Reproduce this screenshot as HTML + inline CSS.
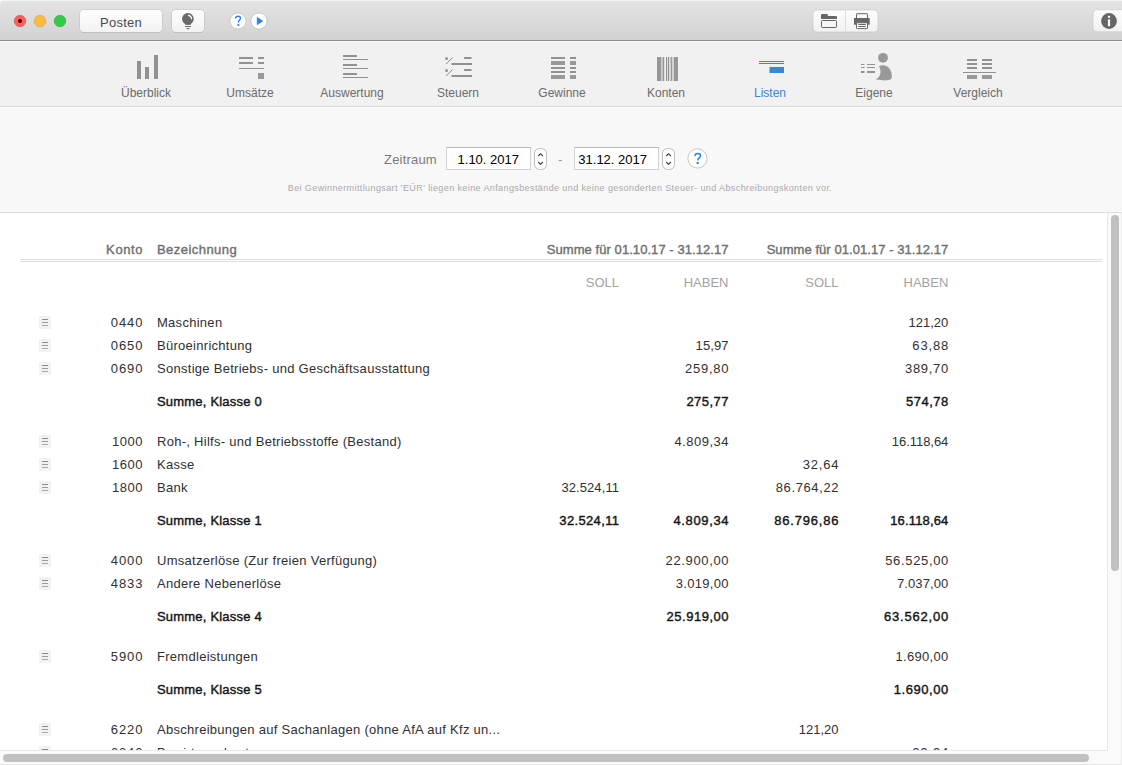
<!DOCTYPE html>
<html><head><meta charset="utf-8">
<style>
*{margin:0;padding:0;box-sizing:border-box}
html,body{width:1122px;height:765px;overflow:hidden;background:#fff;font-family:"Liberation Sans",sans-serif}
.a{position:absolute}
#titlebar{left:0;top:0;width:1122px;height:41px;background:linear-gradient(#e4e4e4,#d2d2d2);border-bottom:1px solid #8e8e8e;border-top-left-radius:4px;box-shadow:inset 0 1px 0 #f5f5f5}
.tl{width:12px;height:12px;border-radius:50%;top:15px}
.btn{background:linear-gradient(#fdfdfd,#f3f3f3);border-radius:4px;box-shadow:0 0 0 0.5px #c0c0c0,0 1px 0 rgba(0,0,0,0.12)}
#toolbar{left:0;top:41px;width:1122px;height:66px;background:#f1f1f1;border-bottom:1px solid #dadada;box-shadow:inset 0 1px 0 #f7f7f7}
.tbl{font-size:12px;color:#6b6b6b;top:86px;width:100px;text-align:center;white-space:nowrap}
#filter{left:0;top:107px;width:1122px;height:106px;background:#f8f8f8;border-bottom:1px solid #dedede}
.t{position:absolute;font-size:13px;color:#303030;white-space:nowrap;line-height:16px}
.r{text-align:right}
.b{color:#141414;-webkit-text-stroke:0.4px #141414}
.h{color:#707070;-webkit-text-stroke:0.4px #707070;letter-spacing:0.06px}
.sh{color:#a3a3a3}
.kn{letter-spacing:0.9px;margin-right:-0.9px}
.tx{letter-spacing:0.28px}
.nm{letter-spacing:0.15px;margin-right:-0.15px}
.ic{position:absolute;left:39px;width:12px;height:13px;background:#f2f2f2}
.ic i{position:absolute;left:3px;width:6px;height:1px;background:#9a9a9a}
.ic i:first-child{background:#8a8a8a}.ic i:last-child{background:#a8a8a8}
</style></head><body>
<div id="titlebar" class="a"></div>
<svg class="a" style="left:0;top:0" width="80" height="40" viewBox="0 0 80 40">
 <circle cx="20" cy="21" r="5.75" fill="#fc605c" stroke="#e0443e" stroke-width="0.6"/>
 <circle cx="20" cy="21" r="2" fill="#4d0000"/>
 <circle cx="40" cy="21" r="5.75" fill="#fdbc40" stroke="#dea123" stroke-width="0.6"/>
 <circle cx="60" cy="21" r="5.75" fill="#34c84a" stroke="#1dad2b" stroke-width="0.6"/>
</svg>
<div class="a btn" style="left:80px;top:10px;width:82px;height:22px;font-size:13px;color:#4a4a4a;text-align:center;line-height:22px;padding-top:2px;letter-spacing:0.25px">Posten</div>
<div class="a btn" style="left:172px;top:10px;width:32px;height:22px"></div>


<svg class="a" style="left:0;top:0" width="1122" height="40" viewBox="0 0 1122 40">
 <g fill="#6a6a6a">
  <circle cx="187.9" cy="18.8" r="5.9"/>
  <path d="M184.6,22 L191.2,22 L190.9,24.8 L185.2,24.8 Z"/>
  <rect x="185.1" y="26" width="5.8" height="1"/>
  <ellipse cx="188" cy="28.6" rx="1.8" ry="0.6"/>
 </g>
 <path d="M188.6,15.3 A3.9,3.9 0 0 1 191.6,18.8" fill="none" stroke="#fff" stroke-width="1.25" stroke-linecap="round"/>
 <circle cx="237.9" cy="21" r="8.1" fill="#fff" stroke="#b9b9b9" stroke-width="0.7"/>
 <circle cx="259" cy="21" r="8.1" fill="#fff" stroke="#b9b9b9" stroke-width="0.7"/>
 <path d="M257.3,17.6 L262.6,21.1 L257.3,24.6 Z" fill="#2b7ff0" stroke="#2b7ff0" stroke-width="0.9" stroke-linejoin="round"/>
 <path d="M235.7,18.4 C235.7,17 236.7,16.3 238.1,16.3 C239.6,16.3 240.5,17.1 240.5,18.3 C240.5,19.9 238.4,20.3 238.4,22.6" fill="none" stroke="#2b7ff0" stroke-width="1.4"/>
 <rect x="237.5" y="24.1" width="1.8" height="1.8" fill="#2b7ff0"/>
 <rect x="813" y="10" width="65" height="22" rx="4" fill="url(#bg)" stroke="#c4c4c4" stroke-width="0.6"/>
 <rect x="845" y="10.5" width="1" height="21" fill="#dcdcdc"/>
 <g fill="#666">
  <path d="M821,19 L821,15 Q821,14 822,14 L827,14 Q827.8,14 827.8,15 L827.8,16 L836,16 Q837,16 837,17 L837,19 Z"/>
  <path d="M854,18 L869.7,18 L869.7,24.7 L854,24.7 Z"/>
 </g>
 <g fill="none" stroke="#666" stroke-width="1">
  <rect x="821.5" y="20.5" width="15" height="7" rx="0.8"/>
  <path d="M856.5,18 L856.5,14.2 Q856.5,13.7 857,13.7 L867,13.7 Q867.5,13.7 867.5,14.2 L867.5,18"/>
  <rect x="856.5" y="22.8" width="11" height="5.8" rx="0.6" fill="#fff"/>
 </g>
 <rect x="858.3" y="24" width="7.5" height="1" fill="#666"/><rect x="858.3" y="26" width="7.5" height="1" fill="#666"/>
 <rect x="1093" y="9.8" width="40" height="22" rx="4" fill="url(#bg)" stroke="#c4c4c4" stroke-width="0.6"/>
 <circle cx="1109" cy="21" r="7.9" fill="#666"/>
 <rect x="1107.9" y="15.8" width="2.2" height="2" fill="#fff"/>
 <rect x="1107.9" y="19.4" width="2.2" height="6.8" fill="#fff"/>
 <defs><linearGradient id="bg" x1="0" y1="0" x2="0" y2="1"><stop offset="0" stop-color="#fdfdfd"/><stop offset="1" stop-color="#f2f2f2"/></linearGradient></defs>
</svg>

<div id="toolbar" class="a"></div>
<svg class="a" style="left:0;top:0" width="1122" height="107" viewBox="0 0 1122 107">
<g fill="#929292">
<rect x="137" y="61" width="4" height="18"/><rect x="145" y="67" width="4" height="12"/><rect x="154" y="55" width="4" height="24"/>
<rect x="239" y="57" width="14" height="2"/><rect x="258" y="57" width="6" height="2"/>
<rect x="239" y="62" width="14" height="2"/><rect x="258" y="62" width="6" height="2"/>
<rect x="239" y="68" width="25" height="1"/><rect x="258" y="73" width="6" height="6" fill="#9a9a9a"/>
<rect x="343" y="55" width="14" height="2"/><rect x="343" y="59" width="25" height="1"/>
<rect x="343" y="64" width="14" height="2"/><rect x="343" y="68" width="25" height="1"/>
<rect x="343" y="73" width="14" height="2"/><rect x="343" y="77" width="25" height="1"/>
<circle cx="446.5" cy="58.4" r="1.5"/><circle cx="446.5" cy="70.4" r="1.5"/>
<rect x="464" y="57" width="7.5" height="2"/><rect x="451.5" y="63" width="20.5" height="2"/>
<rect x="464" y="69" width="7.5" height="2"/><rect x="451.5" y="75" width="20.5" height="2"/>
<rect x="551" y="57" width="14" height="2"/><rect x="570" y="57" width="6" height="2"/>
<rect x="551" y="61" width="14" height="4" fill="#999"/><rect x="570" y="61" width="6" height="4" fill="#999"/>
<rect x="551" y="67" width="14" height="2"/><rect x="570" y="67" width="6" height="2"/>
<rect x="551" y="71" width="14" height="2"/><rect x="570" y="71" width="6" height="2"/>
<rect x="551" y="75" width="14" height="4" fill="#999"/><rect x="570" y="75" width="6" height="4" fill="#999"/>
<rect x="657" y="57" width="4" height="24" fill="#979797"/><rect x="661" y="57" width="1.5" height="24" fill="#d2d2d2"/><rect x="662.5" y="57" width="1.7" height="24" fill="#999"/>
<rect x="666" y="57" width="1.2" height="24"/><rect x="668" y="57" width="1.2" height="24"/>
<rect x="670.6" y="57" width="1.6" height="24" fill="#999"/><rect x="672.2" y="57" width="1.8" height="24" fill="#d2d2d2"/><rect x="674" y="57" width="4" height="24" fill="#979797"/>
<rect x="861" y="64" width="3.5" height="1"/><rect x="867" y="64" width="8" height="1"/>
<rect x="861" y="67" width="3.5" height="1"/><rect x="867" y="67" width="8" height="1"/>
<rect x="861" y="71" width="3.5" height="2"/><rect x="867" y="71" width="8" height="2"/>
<circle cx="883" cy="57.8" r="4.9" fill="#999"/>
<path d="M879,66.5 C881,64.8 886,64.5 889,68 C891.5,71 892.5,76 891.5,78.5 C890,80.8 884,80.8 876,79.6 C880.5,76.5 882,71.5 879,66.5 Z" fill="#999"/>
<rect x="967" y="59" width="10" height="2"/><rect x="982" y="59" width="10" height="2"/>
<rect x="967" y="63" width="10" height="2"/><rect x="982" y="63" width="10" height="2"/>
<rect x="967" y="67" width="10" height="2"/><rect x="982" y="67" width="10" height="2"/>
<rect x="963" y="72" width="33" height="1"/>
<rect x="967" y="75" width="10" height="4" fill="#999"/><rect x="982" y="75" width="10" height="4" fill="#999"/>
</g>
<g fill="#3a86dc"><rect x="759" y="61" width="25" height="1"/><rect x="759" y="63" width="25" height="1"/><rect x="769.5" y="67" width="14.5" height="6"/></g>
<g fill="#8e8e8e"><path d="M446.1,64 L452.6,57.5" stroke="#8e8e8e" stroke-width="1"/><path d="M446.1,76 L452.6,69.5" stroke="#8e8e8e" stroke-width="1"/></g>
</svg>
<div class="a tbl" style="left:96px">Überblick</div>
<div class="a tbl" style="left:200px">Umsätze</div>
<div class="a tbl" style="left:302px">Auswertung</div>
<div class="a tbl" style="left:408px">Steuern</div>
<div class="a tbl" style="left:512px">Gewinne</div>
<div class="a tbl" style="left:616px">Konten</div>
<div class="a tbl" style="left:720px;color:#3b83d6">Listen</div>
<div class="a tbl" style="left:824px">Eigene</div>
<div class="a tbl" style="left:928px">Vergleich</div>

<div id="filter" class="a"></div>
<div class="a" style="left:384px;top:152px;font-size:13px;color:#7a7a7a;letter-spacing:0.2px;line-height:16px">Zeitraum</div>
<div class="a" style="left:446px;top:147px;width:85px;height:23px;background:#fff;border:1px solid #d2d2d2;border-top-color:#b8b8b8;font-size:13px;color:#000;line-height:23px;text-align:right;padding-right:11px">1.10. 2017</div>
<div class="a" style="left:574px;top:147px;width:85px;height:23px;background:#fff;border:1px solid #d2d2d2;border-top-color:#b8b8b8;font-size:13px;color:#000;line-height:23px;text-align:right;padding-right:11px">31.12. 2017</div>
<div class="a" style="left:558px;top:152px;font-size:13px;color:#9a9a9a;line-height:16px">-</div>
<svg class="a" style="left:0;top:140px" width="1122" height="40" viewBox="0 140 1122 40">
 <rect x="534.5" y="148.5" width="12" height="21" rx="5" fill="#fff" stroke="#bdbdbd"/>
 <rect x="662.5" y="148.5" width="12" height="21" rx="5" fill="#fff" stroke="#bdbdbd"/>
 <path d="M538.2,156 L540.5,153.7 L542.8,156 M538.2,162 L540.5,164.3 L542.8,162" fill="none" stroke="#333" stroke-width="1.1"/>
 <path d="M666.2,156 L668.5,153.7 L670.8,156 M666.2,162 L668.5,164.3 L670.8,162" fill="none" stroke="#333" stroke-width="1.1"/>
 <circle cx="697.45" cy="158.45" r="9.6" fill="#fff" stroke="#c6c6c6" stroke-width="1"/>
 <path d="M695,156 C695,154.2 696.2,153.4 697.8,153.4 C699.5,153.4 700.6,154.4 700.6,155.8 C700.6,157.8 697.7,158.1 697.7,160.6" fill="none" stroke="#2b80ee" stroke-width="1.5"/>
 <rect x="696.6" y="162" width="2.1" height="2" fill="#2b80ee"/>
</svg>

<div class="a" style="left:0;top:182px;width:1122px;text-align:center;font-size:9px;letter-spacing:0.4px;color:#a9a9a9;line-height:12px;padding-right:2px">Bei Gewinnermittlungsart 'EÜR' liegen keine Anfangsbestände und keine gesonderten Steuer- und Abschreibungskonten vor.</div>
<!--TABLE-->
<div class="a" style="left:0;top:213px;width:1122px;height:552px;background:#fafafa;border-right:1px solid #ececec;border-bottom:1px solid #e6e6e6"></div>
<div class="a" style="left:0;top:213px;width:1107px;height:537px;background:#fff;overflow:hidden">
<div class="a" style="left:0;top:-213px;width:1122px;height:765px">
<div class="t r h" style="right:979.5px;top:242px;letter-spacing:0.6px;margin-right:-0.6px;">Konto</div>
<div class="t h" style="left:157px;top:242px;letter-spacing:0.45px;">Bezeichnung</div>
<div class="t r h" style="right:393.5px;top:242px;">Summe für 01.10.17 - 31.12.17</div>
<div class="t r h" style="right:173.70000000000005px;top:242px;">Summe für 01.01.17 - 31.12.17</div>
<div class="a" style="left:20px;top:259px;width:1082px;height:1px;background:#dedede"></div>
<div class="a" style="left:20px;top:261px;width:1082px;height:1px;background:#dedede"></div>
<div class="t r sh" style="right:503px;top:275px;">SOLL</div>
<div class="t r sh" style="right:393.5px;top:275px;">HABEN</div>
<div class="t r sh" style="right:283.5px;top:275px;">SOLL</div>
<div class="t r sh" style="right:173.70000000000005px;top:275px;">HABEN</div>
<div class="ic" style="top:316px"><i style="top:3px"></i><i style="top:6px"></i><i style="top:9px"></i></div>
<div class="t r kn" style="right:979.5px;top:315px;letter-spacing:0.9px;margin-right:-0.9px;">0440</div>
<div class="t tx" style="left:157px;top:315px;">Maschinen</div>
<div class="t r nm" style="right:173.70000000000005px;top:315px;letter-spacing:0.0px;margin-right:-0.0px;">121,20</div>
<div class="ic" style="top:339px"><i style="top:3px"></i><i style="top:6px"></i><i style="top:9px"></i></div>
<div class="t r kn" style="right:979.5px;top:338px;letter-spacing:0.9px;margin-right:-0.9px;">0650</div>
<div class="t tx" style="left:157px;top:338px;">Büroeinrichtung</div>
<div class="t r nm" style="right:393.5px;top:338px;letter-spacing:0.1px;margin-right:-0.1px;">15,97</div>
<div class="t r nm" style="right:173.70000000000005px;top:338px;letter-spacing:0.85px;margin-right:-0.85px;">63,88</div>
<div class="ic" style="top:362px"><i style="top:3px"></i><i style="top:6px"></i><i style="top:9px"></i></div>
<div class="t r kn" style="right:979.5px;top:361px;letter-spacing:0.9px;margin-right:-0.9px;">0690</div>
<div class="t tx" style="left:157px;top:361px;">Sonstige Betriebs- und Geschäftsausstattung</div>
<div class="t r nm" style="right:393.5px;top:361px;letter-spacing:0.76px;margin-right:-0.76px;">259,80</div>
<div class="t r nm" style="right:173.70000000000005px;top:361px;letter-spacing:0.72px;margin-right:-0.72px;">389,70</div>
<div class="t b" style="left:157px;top:394px;letter-spacing:0.2px;">Summe, Klasse 0</div>
<div class="t r b" style="right:393.5px;top:394px;letter-spacing:0.46px;margin-right:-0.46px;">275,77</div>
<div class="t r b" style="right:173.70000000000005px;top:394px;letter-spacing:0.52px;margin-right:-0.52px;">574,78</div>
<div class="ic" style="top:435px"><i style="top:3px"></i><i style="top:6px"></i><i style="top:9px"></i></div>
<div class="t r kn" style="right:979.5px;top:434px;letter-spacing:0.5px;margin-right:-0.5px;">1000</div>
<div class="t tx" style="left:157px;top:434px;">Roh-, Hilfs- und Betriebsstoffe (Bestand)</div>
<div class="t r nm" style="right:393.5px;top:434px;letter-spacing:0.5px;margin-right:-0.5px;">4.809,34</div>
<div class="t r nm" style="right:173.70000000000005px;top:434px;letter-spacing:-0.05px;margin-right:0.05px;">16.118,64</div>
<div class="ic" style="top:458px"><i style="top:3px"></i><i style="top:6px"></i><i style="top:9px"></i></div>
<div class="t r kn" style="right:979.5px;top:457px;letter-spacing:0.5px;margin-right:-0.5px;">1600</div>
<div class="t tx" style="left:157px;top:457px;">Kasse</div>
<div class="t r nm" style="right:283.5px;top:457px;letter-spacing:0.8px;margin-right:-0.8px;">32,64</div>
<div class="ic" style="top:481px"><i style="top:3px"></i><i style="top:6px"></i><i style="top:9px"></i></div>
<div class="t r kn" style="right:979.5px;top:480px;letter-spacing:0.5px;margin-right:-0.5px;">1800</div>
<div class="t tx" style="left:157px;top:480px;">Bank</div>
<div class="t r nm" style="right:503px;top:480px;letter-spacing:0.09px;margin-right:-0.09px;">32.524,11</div>
<div class="t r nm" style="right:283.5px;top:480px;letter-spacing:0.61px;margin-right:-0.61px;">86.764,22</div>
<div class="t b" style="left:157px;top:513px;letter-spacing:0.2px;">Summe, Klasse 1</div>
<div class="t r b" style="right:503px;top:513px;letter-spacing:0.35px;margin-right:-0.35px;">32.524,11</div>
<div class="t r b" style="right:393.5px;top:513px;letter-spacing:0.63px;margin-right:-0.63px;">4.809,34</div>
<div class="t r b" style="right:283.5px;top:513px;letter-spacing:0.79px;margin-right:-0.79px;">86.796,86</div>
<div class="t r b" style="right:173.70000000000005px;top:513px;letter-spacing:0.16px;margin-right:-0.16px;">16.118,64</div>
<div class="ic" style="top:554px"><i style="top:3px"></i><i style="top:6px"></i><i style="top:9px"></i></div>
<div class="t r kn" style="right:979.5px;top:553px;letter-spacing:0.9px;margin-right:-0.9px;">4000</div>
<div class="t tx" style="left:157px;top:553px;">Umsatzerlöse (Zur freien Verfügung)</div>
<div class="t r nm" style="right:393.5px;top:553px;letter-spacing:0.64px;margin-right:-0.64px;">22.900,00</div>
<div class="t r nm" style="right:173.70000000000005px;top:553px;letter-spacing:0.66px;margin-right:-0.66px;">56.525,00</div>
<div class="ic" style="top:577px"><i style="top:3px"></i><i style="top:6px"></i><i style="top:9px"></i></div>
<div class="t r kn" style="right:979.5px;top:576px;letter-spacing:0.9px;margin-right:-0.9px;">4833</div>
<div class="t tx" style="left:157px;top:576px;">Andere Nebenerlöse</div>
<div class="t r nm" style="right:393.5px;top:576px;letter-spacing:0.3px;margin-right:-0.3px;">3.019,00</div>
<div class="t r nm" style="right:173.70000000000005px;top:576px;letter-spacing:0.1px;margin-right:-0.1px;">7.037,00</div>
<div class="t b" style="left:157px;top:609px;letter-spacing:0.2px;">Summe, Klasse 4</div>
<div class="t r b" style="right:393.5px;top:609px;letter-spacing:0.51px;margin-right:-0.51px;">25.919,00</div>
<div class="t r b" style="right:173.70000000000005px;top:609px;letter-spacing:0.81px;margin-right:-0.81px;">63.562,00</div>
<div class="ic" style="top:650px"><i style="top:3px"></i><i style="top:6px"></i><i style="top:9px"></i></div>
<div class="t r kn" style="right:979.5px;top:649px;letter-spacing:0.9px;margin-right:-0.9px;">5900</div>
<div class="t tx" style="left:157px;top:649px;">Fremdleistungen</div>
<div class="t r nm" style="right:173.70000000000005px;top:649px;letter-spacing:0.31px;margin-right:-0.31px;">1.690,00</div>
<div class="t b" style="left:157px;top:682px;letter-spacing:0.2px;">Summe, Klasse 5</div>
<div class="t r b" style="right:173.70000000000005px;top:682px;letter-spacing:0.57px;margin-right:-0.57px;">1.690,00</div>
<div class="ic" style="top:723px"><i style="top:3px"></i><i style="top:6px"></i><i style="top:9px"></i></div>
<div class="t r kn" style="right:979.5px;top:722px;letter-spacing:0.9px;margin-right:-0.9px;">6220</div>
<div class="t tx" style="left:157px;top:722px;">Abschreibungen auf Sachanlagen (ohne AfA auf Kfz un...</div>
<div class="t r nm" style="right:283.5px;top:722px;letter-spacing:0.0px;margin-right:-0.0px;">121,20</div>
<div class="ic" style="top:746px"><i style="top:3px"></i><i style="top:6px"></i><i style="top:9px"></i></div>
<div class="t r kn" style="right:979.5px;top:745px;letter-spacing:0.9px;margin-right:-0.9px;">6240</div>
<div class="t tx" style="left:157px;top:745px;">Bewirtungskosten</div>
<div class="t r nm" style="right:173.70000000000005px;top:745px;letter-spacing:0.8px;margin-right:-0.8px;">99,94</div>
</div></div>
<div class="a" style="left:1107px;top:213px;width:1px;height:538px;background:#e8e8e8"></div>
<div class="a" style="left:0;top:750px;width:1108px;height:1px;background:#e8e8e8"></div>
<div class="a" style="left:1111px;top:215px;width:8px;height:356px;border-radius:4px;background:#c1c1c1"></div>
<div class="a" style="left:3px;top:754px;width:1086px;height:8px;border-radius:4px;background:#c1c1c1"></div>
</body></html>
